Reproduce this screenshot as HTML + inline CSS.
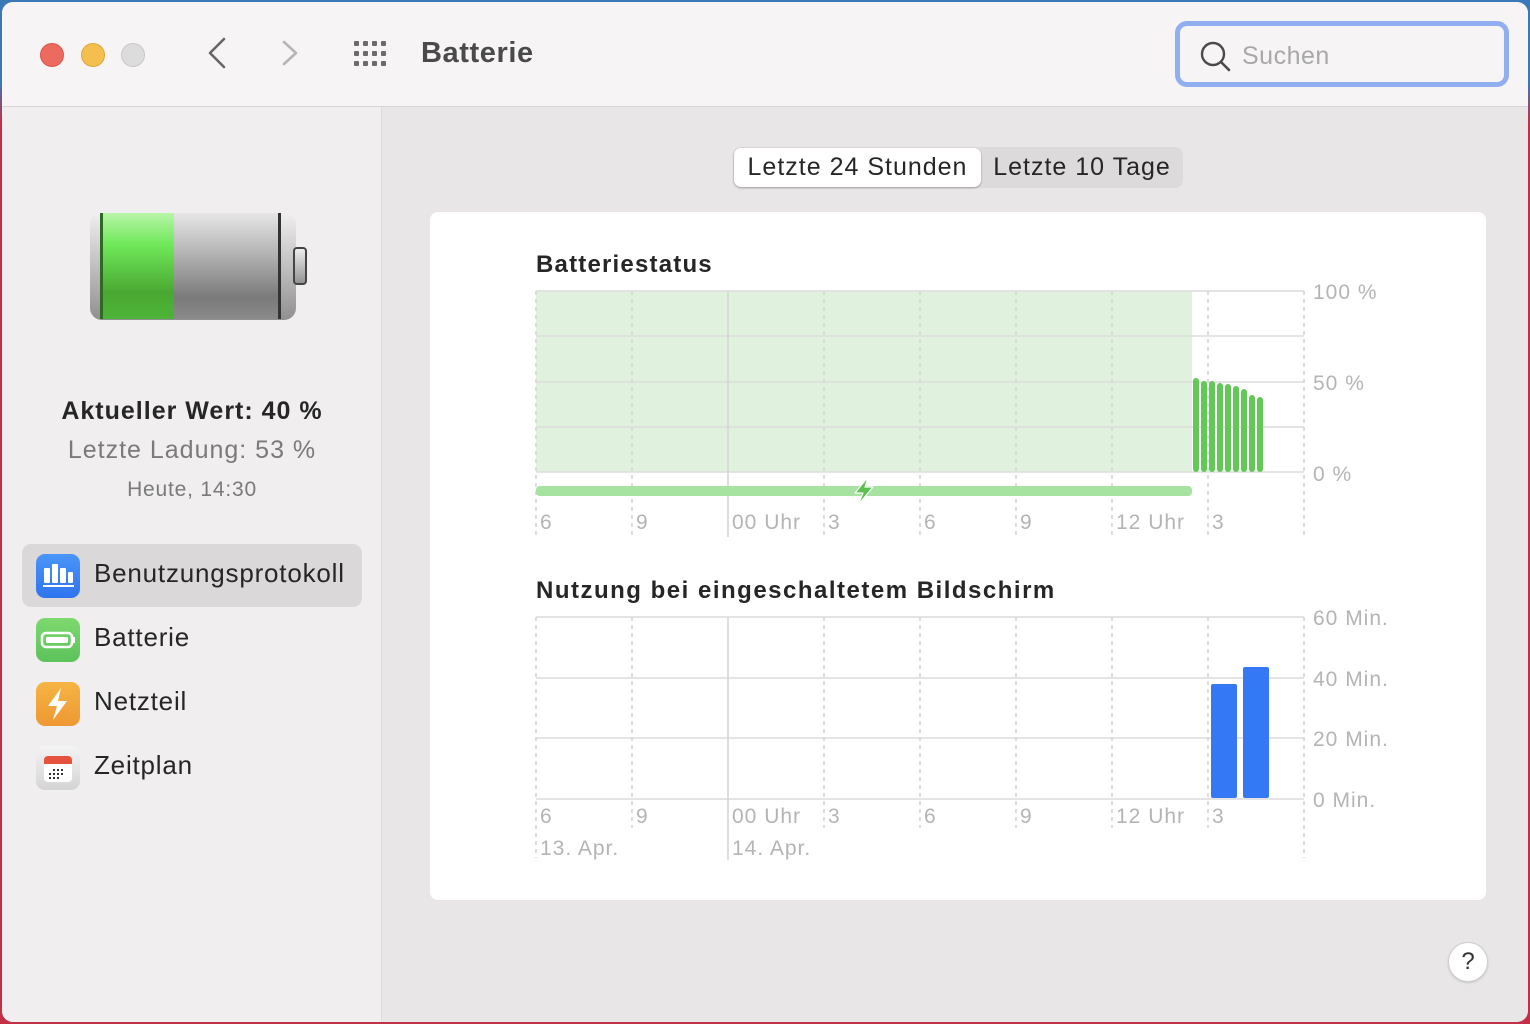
<!DOCTYPE html>
<html><head><meta charset="utf-8"><style>
*{margin:0;padding:0;box-sizing:border-box}
body{width:1530px;height:1024px;overflow:hidden;background:linear-gradient(180deg,#3a78b8 0,#3a78b8 8%,#c23048 12%,#c23048 100%);font-family:"Liberation Sans",sans-serif;position:relative}
.win{position:absolute;left:2px;top:2px;width:1526px;height:1020px;border-radius:11px;overflow:hidden;background:#e8e6e6}
.title{position:absolute;left:0;top:0;width:1526px;height:105px;background:#f6f4f4;border-bottom:1px solid #d6d4d4}
.side{position:absolute;left:0;top:105px;width:380px;height:915px;background:#f0eeee;border-right:1px solid #dcdada}
.t{position:absolute;white-space:nowrap}
.dot{position:absolute;width:24px;height:24px;border-radius:50%;top:41px}
.card{position:absolute;left:428px;top:210px;width:1056px;height:688px;background:#fff;border-radius:8px}
</style></head><body>
<div class="win">
<div class="title">
 <div class="dot" style="left:38px;background:#ed6a5e;border:1px solid #d9564b"></div>
 <div class="dot" style="left:79px;background:#f5bf4f;border:1px solid #dea63a"></div>
 <div class="dot" style="left:119px;background:#dcdcdc;border:1px solid #c8c8c8"></div>
 <svg style="position:absolute;left:200px;top:34px" width="100" height="34"><path d="M22 3 L8 17 L22 31" fill="none" stroke="#666" stroke-width="2.6" stroke-linecap="round" stroke-linejoin="round"/><path d="M82 6 L94 17 L82 28" fill="none" stroke="#b5b5b5" stroke-width="2.6" stroke-linecap="round" stroke-linejoin="round"/></svg>
 <svg style="position:absolute;left:352px;top:39px" width="40" height="30" fill="#6b6b6b">
  <rect x="0" y="0" width="5" height="5" rx="1"/><rect x="9" y="0" width="5" height="5" rx="1"/><rect x="18" y="0" width="5" height="5" rx="1"/><rect x="27" y="0" width="5" height="5" rx="1"/>
  <rect x="0" y="10" width="5" height="5" rx="1"/><rect x="9" y="10" width="5" height="5" rx="1"/><rect x="18" y="10" width="5" height="5" rx="1"/><rect x="27" y="10" width="5" height="5" rx="1"/>
  <rect x="0" y="20" width="5" height="5" rx="1"/><rect x="9" y="20" width="5" height="5" rx="1"/><rect x="18" y="20" width="5" height="5" rx="1"/><rect x="27" y="20" width="5" height="5" rx="1"/>
 </svg>
 <div class="t" style="left:419px;top:35px;font-size:29px;font-weight:bold;color:#4a4a4a;letter-spacing:.6px">Batterie</div>
 <div style="position:absolute;left:1173px;top:19px;width:334px;height:66px;border:5px solid #90aef0;border-radius:12px;background:#f6f4f4"></div>
 <svg style="position:absolute;left:1196px;top:38px" width="34" height="34"><circle cx="15" cy="14" r="11" fill="none" stroke="#4a4a4a" stroke-width="2.4"/><path d="M23 22 L31 30" stroke="#4a4a4a" stroke-width="2.6" stroke-linecap="round"/></svg>
 <div class="t" style="left:1240px;top:40px;font-size:25px;color:#a8a8a8;letter-spacing:.5px">Suchen</div>
</div>
<div class="side">
 <svg style="position:absolute;left:86px;top:103px" width="220" height="115">
  <defs>
   <linearGradient id="gg" x1="0" y1="0" x2="0" y2="1"><stop offset="0" stop-color="#b8f5a8"/><stop offset=".3" stop-color="#6fe85a"/><stop offset=".75" stop-color="#4aa832"/><stop offset="1" stop-color="#4cb438"/></linearGradient>
   <linearGradient id="sg" x1="0" y1="0" x2="0" y2="1"><stop offset="0" stop-color="#e6e6e6"/><stop offset=".35" stop-color="#b8b8b8"/><stop offset=".8" stop-color="#7a7a7a"/><stop offset="1" stop-color="#8a8a8a"/></linearGradient>
   <linearGradient id="cg" x1="0" y1="0" x2="0" y2="1"><stop offset="0" stop-color="#f0f0f0"/><stop offset=".5" stop-color="#c0c0c0"/><stop offset="1" stop-color="#909090"/></linearGradient>
  </defs>
  <rect x="2" y="2" width="206" height="108" rx="12" fill="url(#cg)"/>
  <rect x="14" y="3" width="72" height="106" fill="url(#gg)"/>
  <rect x="86" y="3" width="106" height="106" fill="url(#sg)"/>
  <rect x="12" y="3" width="3" height="106" fill="#2f6a22"/>
  <rect x="190" y="3" width="3" height="106" fill="#333"/>
  <rect x="206" y="38" width="12" height="36" rx="3" fill="url(#cg)" stroke="#444" stroke-width="2"/>
 </svg>
 <div class="t" style="left:0;width:380px;text-align:center;top:290px;font-size:25px;font-weight:bold;color:#262626;letter-spacing:1px">Aktueller Wert: 40 %</div>
 <div class="t" style="left:0;width:380px;text-align:center;top:329px;font-size:25px;color:#7a7a7a;letter-spacing:1px">Letzte Ladung: 53 %</div>
 <div class="t" style="left:0;width:380px;text-align:center;top:371px;font-size:21px;color:#7a7a7a;letter-spacing:.8px">Heute, 14:30</div>
 <div style="position:absolute;left:20px;top:437px;width:340px;height:63px;background:#dad8d8;border-radius:9px"></div>
 <div style="position:absolute;left:34px;top:447px;width:44px;height:44px;border-radius:9px;background:linear-gradient(#4a95f8,#2f74ee)"></div>
 <svg style="position:absolute;left:34px;top:447px" width="44" height="44" fill="#fff"><rect x="8" y="14" width="6" height="15" rx="1"/><rect x="16" y="10" width="6" height="19" rx="1"/><rect x="24" y="14" width="6" height="15" rx="1"/><rect x="32" y="18" width="5" height="11" rx="1"/><rect x="7" y="31" width="31" height="2"/></svg>
 <div class="t" style="left:92px;top:451px;font-size:26px;color:#262626;letter-spacing:.8px">Benutzungsprotokoll</div>
 <div style="position:absolute;left:34px;top:511px;width:44px;height:44px;border-radius:9px;background:linear-gradient(#7ed96e,#5cc25a)"></div>
 <svg style="position:absolute;left:34px;top:511px" width="44" height="44"><rect x="6" y="15" width="30" height="14" rx="4" fill="none" stroke="#fff" stroke-width="2.5"/><rect x="10" y="19" width="22" height="6" rx="1.5" fill="#fff"/><rect x="37" y="19" width="2" height="6" fill="#fff"/></svg>
 <div class="t" style="left:92px;top:515px;font-size:26px;color:#262626;letter-spacing:.8px">Batterie</div>
 <div style="position:absolute;left:34px;top:575px;width:44px;height:44px;border-radius:9px;background:linear-gradient(#f5b442,#ef9833)"></div>
 <svg style="position:absolute;left:34px;top:575px" width="44" height="44"><path d="M25 6 L12 24 L21 24 L17 38 L31 19 L22 19 Z" fill="#fff"/></svg>
 <div class="t" style="left:92px;top:579px;font-size:26px;color:#262626;letter-spacing:.8px">Netzteil</div>
 <div style="position:absolute;left:34px;top:639px;width:44px;height:44px;border-radius:9px;background:linear-gradient(#f4f4f4,#d4d4d4)"></div>
 <svg style="position:absolute;left:34px;top:639px" width="44" height="44"><rect x="8" y="10" width="28" height="26" rx="4" fill="#fff"/><path d="M8 18 V14 a4 4 0 0 1 4 -4 H32 a4 4 0 0 1 4 4 V18 Z" fill="#e5533f"/><g fill="#333"><rect x="17" y="23" width="2" height="2"/><rect x="21" y="23" width="2" height="2"/><rect x="25" y="23" width="2" height="2"/><rect x="13" y="27" width="2" height="2"/><rect x="17" y="27" width="2" height="2"/><rect x="21" y="27" width="2" height="2"/><rect x="25" y="27" width="2" height="2"/><rect x="13" y="31" width="2" height="2"/><rect x="17" y="31" width="2" height="2"/><rect x="21" y="31" width="2" height="2"/></g></svg>
 <div class="t" style="left:92px;top:643px;font-size:26px;color:#262626;letter-spacing:.8px">Zeitplan</div>
</div>
<div style="position:absolute;left:731px;top:145px;width:450px;height:41px;background:#dcdada;border-radius:8px"></div>
<div style="position:absolute;left:732px;top:146px;width:247px;height:39px;background:#fff;border-radius:7px;box-shadow:0 1px 2px rgba(0,0,0,.3)"></div>
<div class="t" style="left:732px;width:247px;text-align:center;top:151px;font-size:25px;color:#262626;letter-spacing:1px">Letzte 24 Stunden</div>
<div class="t" style="left:980px;width:200px;text-align:center;top:151px;font-size:25px;color:#262626;letter-spacing:1px">Letzte 10 Tage</div>
<div class="card"></div>
<svg style="position:absolute;left:-2px;top:-2px" width="1530" height="1024" font-family="Liberation Sans, sans-serif">
 <text x="536" y="272" font-size="24" font-weight="bold" fill="#262626" letter-spacing="1.2">Batteriestatus</text>
 <text x="536" y="598" font-size="24" font-weight="bold" fill="#262626" letter-spacing="1.5">Nutzung bei eingeschaltetem Bildschirm</text>
 <rect x="536" y="291" width="656" height="181" fill="#e0f2dd"/>
 <g stroke="#dcdcdc" stroke-width="1.5">
  <line x1="536" y1="291" x2="1304" y2="291"/><line x1="536" y1="336" x2="1304" y2="336"/><line x1="536" y1="382" x2="1304" y2="382"/><line x1="536" y1="427" x2="1304" y2="427"/><line x1="536" y1="472" x2="1304" y2="472"/>
  <line x1="536" y1="617" x2="1304" y2="617"/><line x1="536" y1="678" x2="1304" y2="678"/><line x1="536" y1="738" x2="1304" y2="738"/><line x1="536" y1="799" x2="1304" y2="799"/>
 </g>
 <g stroke="#d4d4d4" stroke-width="1.5" stroke-dasharray="4 4">
  <line x1="536" y1="291" x2="536" y2="535"/><line x1="632" y1="291" x2="632" y2="535"/><line x1="824" y1="291" x2="824" y2="535"/><line x1="920" y1="291" x2="920" y2="535"/><line x1="1016" y1="291" x2="1016" y2="535"/><line x1="1112" y1="291" x2="1112" y2="535"/><line x1="1208" y1="291" x2="1208" y2="535"/><line x1="1304" y1="291" x2="1304" y2="535"/>
  <line x1="536" y1="617" x2="536" y2="858"/><line x1="632" y1="617" x2="632" y2="828"/><line x1="824" y1="617" x2="824" y2="828"/><line x1="920" y1="617" x2="920" y2="828"/><line x1="1016" y1="617" x2="1016" y2="828"/><line x1="1112" y1="617" x2="1112" y2="828"/><line x1="1208" y1="617" x2="1208" y2="828"/><line x1="1304" y1="617" x2="1304" y2="858"/>
 </g>
 <g stroke="#d4d4d4" stroke-width="1.5"><line x1="728" y1="291" x2="728" y2="537"/><line x1="728" y1="617" x2="728" y2="860"/></g>
 <rect x="536" y="486" width="656" height="10" rx="4" fill="#a6e3a0"/>
 <path d="M868 477 L855 493 L863 493 L858 505 L873 487 L865 487 Z" fill="#5ac14e" stroke="#fff" stroke-width="1.2" stroke-linejoin="round"/>
 <g fill="#62c956">
  <rect x="1193" y="378" width="6" height="94" rx="3"/><rect x="1201" y="381" width="6" height="91" rx="3"/><rect x="1209" y="381" width="6" height="91" rx="3"/><rect x="1217" y="383" width="6" height="89" rx="3"/><rect x="1225" y="384" width="6" height="88" rx="3"/><rect x="1233" y="386" width="6" height="86" rx="3"/><rect x="1241" y="389" width="6" height="83" rx="3"/><rect x="1249" y="395" width="6" height="77" rx="3"/><rect x="1257" y="397" width="6" height="75" rx="3"/>
 </g>
 <rect x="1211" y="684" width="26" height="114" rx="2" fill="#3478f6"/>
 <rect x="1243" y="667" width="26" height="131" rx="2" fill="#3478f6"/>
 <g font-size="21" fill="#b4b4b4" letter-spacing="1">
  <text x="1313" y="299">100 %</text><text x="1313" y="390">50 %</text><text x="1313" y="481">0 %</text>
  <text x="1313" y="625">60 Min.</text><text x="1313" y="686">40 Min.</text><text x="1313" y="746">20 Min.</text><text x="1313" y="807">0 Min.</text>
  <text x="540" y="529">6</text><text x="636" y="529">9</text><text x="732" y="529">00 Uhr</text><text x="828" y="529">3</text><text x="924" y="529">6</text><text x="1020" y="529">9</text><text x="1116" y="529">12 Uhr</text><text x="1212" y="529">3</text>
  <text x="540" y="823">6</text><text x="636" y="823">9</text><text x="732" y="823">00 Uhr</text><text x="828" y="823">3</text><text x="924" y="823">6</text><text x="1020" y="823">9</text><text x="1116" y="823">12 Uhr</text><text x="1212" y="823">3</text>
  <text x="540" y="855">13. Apr.</text><text x="732" y="855">14. Apr.</text>
 </g>
</svg>
<div style="position:absolute;left:1446px;top:940px;width:40px;height:40px;border-radius:50%;background:#fff;border:1px solid #cfcfcf;box-shadow:0 1px 2px rgba(0,0,0,.15);text-align:center;line-height:38px;font-size:24px;color:#333">?</div>
</div>
</body></html>
